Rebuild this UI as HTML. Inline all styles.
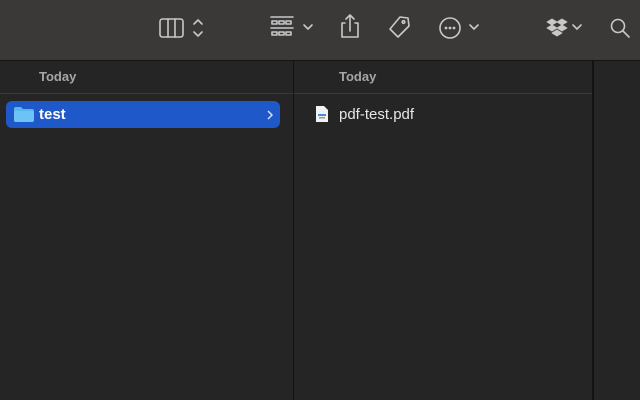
<!DOCTYPE html>
<html><head><style>
body{margin:0;width:640px;height:400px;overflow:hidden;background:#252525;font-family:"Liberation Sans",sans-serif;position:relative}
.tb{position:absolute;left:0;top:0;width:640px;height:60px;background:#3a3938;border-bottom:1px solid #141414}
.vl{position:absolute;top:61px;bottom:0;width:1px;background:#121212}
.hdr{position:absolute;top:69px;color:#a6a6a6;font-size:13px;font-weight:bold}
.hl{position:absolute;top:93px;height:1px;background:#3a3a3a}
svg{position:absolute}
</style></head><body>
<div class="tb">
<svg width="640" height="60" fill="none" stroke="#c8c8c8" stroke-width="1.6" stroke-linecap="round" stroke-linejoin="round">
<rect x="160" y="19" width="23" height="18" rx="2.5"/><line x1="168" y1="19" x2="168" y2="37"/><line x1="175" y1="19" x2="175" y2="37"/>
<polyline points="194,24 198,20 202,24"/><polyline points="194,32 198,36 202,32"/>
<line x1="271" y1="17" x2="293" y2="17"/><rect x="272" y="21" width="5" height="3"/><rect x="279" y="21" width="5" height="3"/><rect x="286" y="21" width="5" height="3"/>
<line x1="271" y1="28" x2="293" y2="28"/><rect x="272" y="32" width="5" height="3"/><rect x="279" y="32" width="5" height="3"/><rect x="286" y="32" width="5" height="3"/>
<polyline points="304,25 308,29 312,25"/>
<path d="M345 23h-3v14h16v-14h-3M350 31v-16M346 19l4-4 4 4"/>
<path d="M400 17l8 1 1 8-11 11-8-8z"/><circle cx="403.5" cy="22" r="1.3"/>
<circle cx="450" cy="28" r="10"/><circle cx="446" cy="28" r=".6" fill="#c8c8c8"/><circle cx="450" cy="28" r=".6" fill="#c8c8c8"/><circle cx="454" cy="28" r=".6" fill="#c8c8c8"/>
<polyline points="470,25 474,29 478,25"/>
<path d="M547 22l5-3 5 3-5 3zM557 22l5-3 5 3-5 3zM547 28l5-3 5 3-5 3zM557 28l5-3 5 3-5 3zM552 33l5-3 5 3-5 3z" fill="#c8c8c8" stroke-width=".8"/>
<polyline points="573,25 577,29 581,25"/>
<circle cx="618" cy="26" r="6.5"/><line x1="623" y1="31" x2="629" y2="37"/>
</svg>
</div>
<div class="hdr" style="left:39px">Today</div>
<div class="hdr" style="left:339px">Today</div>
<div class="hl" style="left:0;width:293px"></div>
<div class="hl" style="left:294px;width:298px"></div>
<div class="vl" style="left:293px"></div>
<div class="vl" style="left:592px;width:2px"></div>
<div style="position:absolute;left:6px;top:101px;width:274px;height:27px;background:#1f58c8;border-radius:6px"></div>
<svg width="20" height="16" style="left:14px;top:106px"><path d="M0 3q0-2 2-2h5l2 2h9q2 0 2 2v9q0 2-2 2H2q-2 0-2-2z" fill="#5bb5ee"/><rect x="0" y="5" width="20" height="11" rx="2" fill="#6cc3f5"/></svg>
<div style="position:absolute;left:39px;top:106px;color:#fff;font-size:15px;font-weight:bold">test</div>
<svg width="8" height="10" style="left:266px;top:110px"><polyline points="2,1 6,5 2,9" fill="none" stroke="#dfe6f5" stroke-width="1.4"/></svg>
<svg width="14" height="18" style="left:315px;top:105px"><path d="M1 1h8l4 4v12H1z" fill="#f2f2f2"/><rect x="3" y="9" width="8" height="2" fill="#4a8be0"/><rect x="4" y="12" width="6" height="1.5" fill="#999"/></svg>
<div style="position:absolute;left:339px;top:106px;color:#e6e6e6;font-size:15px">pdf-test.pdf</div>
</body></html>
